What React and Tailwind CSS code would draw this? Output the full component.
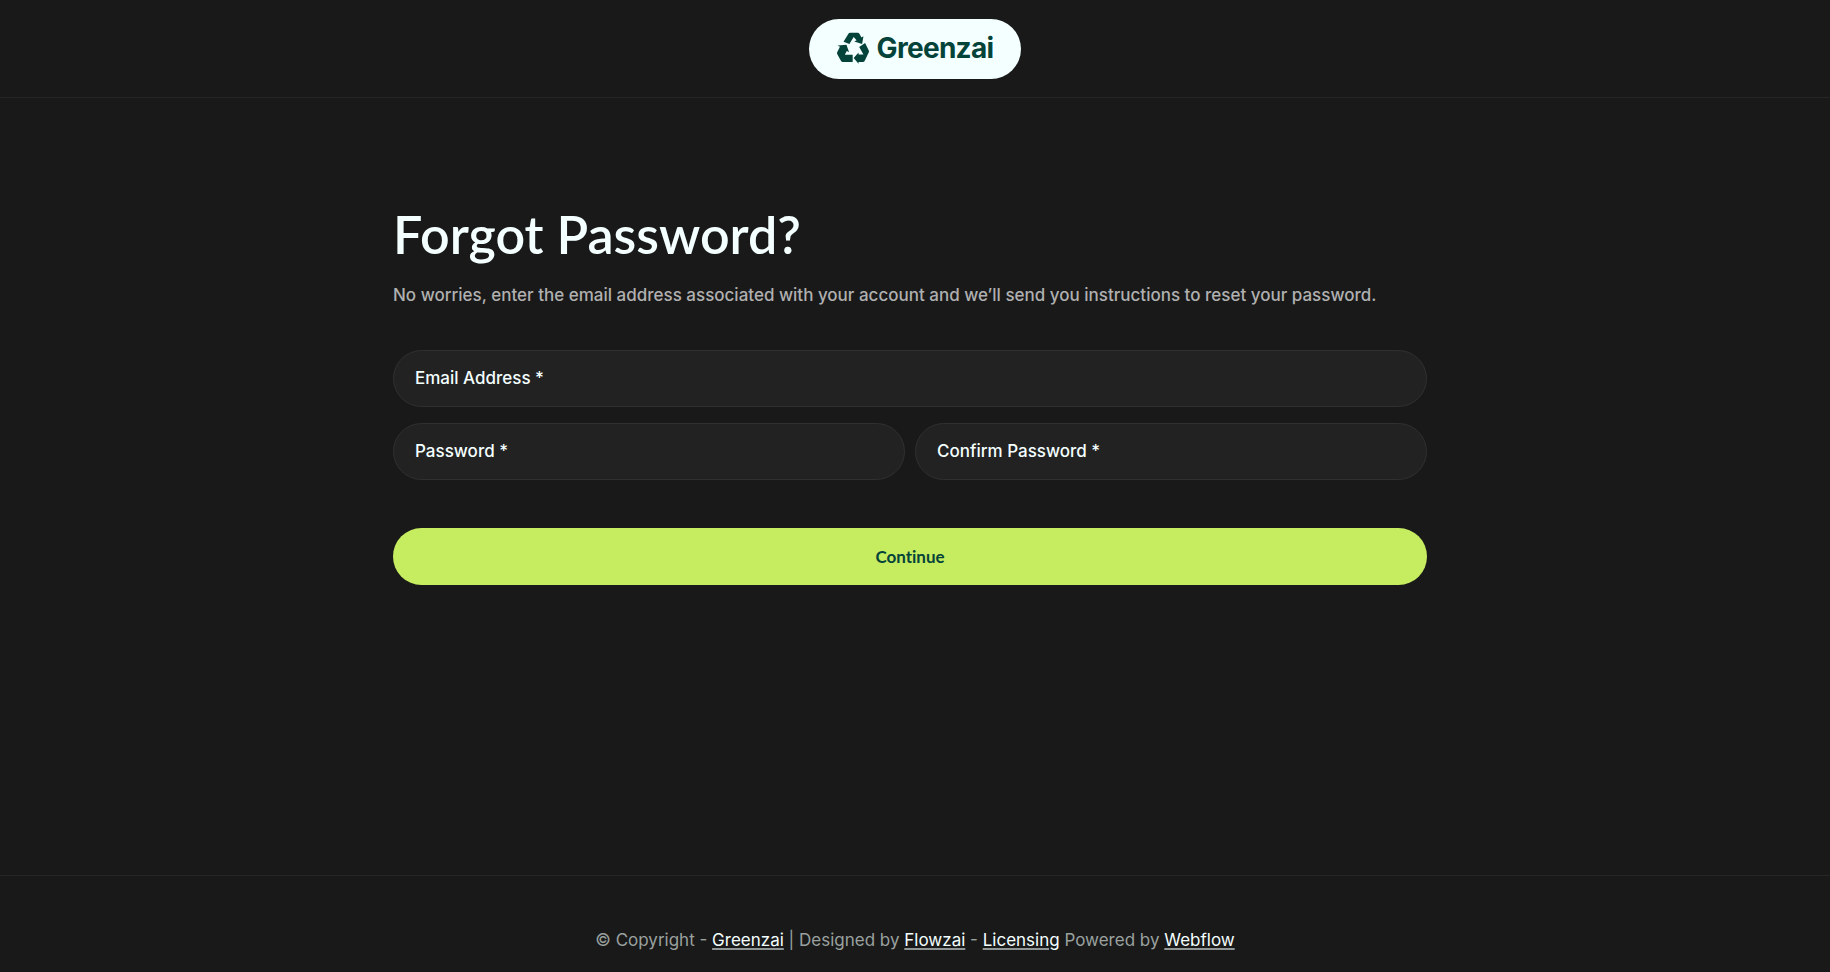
const fieldClass =
  'block h-[57px] w-full rounded-full border border-[#303030] bg-[#222222] px-[21px] pb-0.5 text-[17px] font-medium text-[#f4ffff] placeholder:text-[#f4ffff] placeholder:opacity-100 focus:outline-none focus:border-[#c6ec5f]'

function RecycleIcon({ className }) {
  return (
    <svg viewBox="0 0 98 94" className={className} fill="currentColor" aria-hidden="true">
      <path d="M20 28 35 3q2-3 5-3h23q4 0 6 4l6 11 6-4-4 24-24-8 7-4-9-10-13 22z" />
      <path d="M2 39 29 37 37 60 30 56 24 68H48V90H18q-4 0-6-4L1 66q-2-4 0-7L9 43z" />
      <path d="M68 44 86 32 97 54q2 4 0 7L85 86q-2 4-6 4H66v5L51 78 66 61v6H81z" />
    </svg>
  )
}

function FooterLink({ children }) {
  return (
    <a href="#" className="text-[#f4ffff] underline decoration-[#8f9695] decoration-2 underline-offset-2">
      {children}
    </a>
  )
}

export default function App() {
  return (
    <div className="flex min-h-screen flex-col bg-[#191919] font-['Inter',sans-serif]">
      {/* Header */}
      <header className="flex justify-center border-b border-[#262626] pt-[19px] pb-[18px]">
        <a
          href="#"
          className="flex h-[60px] items-center gap-2 rounded-full bg-[#f4ffff] px-7 pb-0.5 text-[#04433a]"
        >
          <RecycleIcon className="h-8 w-8" />
          <span className="text-[28px] leading-none font-bold tracking-tight">Greenzai</span>
        </a>
      </header>

      {/* Form */}
      <main className="mx-auto w-full max-w-[1044px] flex-1 pt-[105px] pr-[10px] pb-20">
        <h1 className="font-['Lato',sans-serif] text-[52px] leading-[62px] font-semibold text-[#f4ffff]">
          Forgot Password?
        </h1>
        <p className="mt-[18px] text-[17px] leading-6 font-medium text-[#b0b0b0]">
          No worries, enter the email address associated with your account and we’ll send you instructions to reset
          your password.
        </p>

        <form className="mt-[43px]" onSubmit={(e) => e.preventDefault()}>
          <input type="email" aria-label="Email Address" placeholder="Email Address *" className={fieldClass} />
          <div className="mt-4 grid grid-cols-2 gap-[10px]">
            <input type="password" aria-label="Password" placeholder="Password *" className={fieldClass} />
            <input
              type="password"
              aria-label="Confirm Password"
              placeholder="Confirm Password *"
              className={fieldClass}
            />
          </div>
          <button
            type="submit"
            className="mt-12 block h-[57px] w-full cursor-pointer rounded-full bg-[#c6ec5f] font-['Lato',sans-serif] text-[17px] font-bold text-[#04433a] [font-variant-ligatures:none]"
          >
            Continue
          </button>
        </form>
      </main>

      {/* Footer */}
      <footer className="border-t border-[#262626] px-4 pt-[52px] pb-5 text-center text-[17px] leading-6 text-[#9aa19f]">
        © Copyright - <FooterLink>Greenzai</FooterLink> | Designed by <FooterLink>Flowzai</FooterLink> -{' '}
        <FooterLink>Licensing</FooterLink> Powered by <FooterLink>Webflow</FooterLink>
      </footer>
    </div>
  )
}
